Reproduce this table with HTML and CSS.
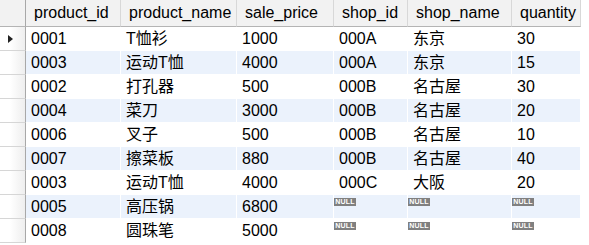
FILE: index.html
```html
<!DOCTYPE html>
<html>

<head>
    <meta charset="utf-8">
    <title>Query result</title>
    <link rel="stylesheet" href="styles.css">
</head>

<body>
    <table class="grid">
        <colgroup>
            <col class="w-ind">
            <col class="w-id">
            <col class="w-name">
            <col class="w-price">
            <col class="w-shop">
            <col class="w-shopname">
            <col class="w-qty">
        </colgroup>
        <thead>
            <tr>
                <th class="ind"></th>
                <th>product_id</th>
                <th>product_name</th>
                <th>sale_price</th>
                <th>shop_id</th>
                <th>shop_name</th>
                <th>quantity</th>
            </tr>
        </thead>
        <tbody>
            <tr class="current">
                <td class="ind"><span class="arrow"></span></td>
                <td>0001</td><td>T恤衫</td><td>1000</td><td>000A</td><td>东京</td><td>30</td>
            </tr>
            <tr>
                <td class="ind"></td>
                <td>0003</td><td>运动T恤</td><td>4000</td><td>000A</td><td>东京</td><td>15</td>
            </tr>
            <tr>
                <td class="ind"></td>
                <td>0002</td><td>打孔器</td><td>500</td><td>000B</td><td>名古屋</td><td>30</td>
            </tr>
            <tr>
                <td class="ind"></td>
                <td>0004</td><td>菜刀</td><td>3000</td><td>000B</td><td>名古屋</td><td>20</td>
            </tr>
            <tr>
                <td class="ind"></td>
                <td>0006</td><td>叉子</td><td>500</td><td>000B</td><td>名古屋</td><td>10</td>
            </tr>
            <tr>
                <td class="ind"></td>
                <td>0007</td><td>擦菜板</td><td>880</td><td>000B</td><td>名古屋</td><td>40</td>
            </tr>
            <tr>
                <td class="ind"></td>
                <td>0003</td><td>运动T恤</td><td>4000</td><td>000C</td><td>大阪</td><td>20</td>
            </tr>
            <tr>
                <td class="ind"></td>
                <td>0005</td><td>高压锅</td><td>6800</td>
                <td class="null"><span class="badge">NULL</span></td>
                <td class="null"><span class="badge">NULL</span></td>
                <td class="null"><span class="badge">NULL</span></td>
            </tr>
            <tr>
                <td class="ind"></td>
                <td>0008</td><td>圆珠笔</td><td>5000</td>
                <td class="null"><span class="badge">NULL</span></td>
                <td class="null"><span class="badge">NULL</span></td>
                <td class="null"><span class="badge">NULL</span></td>
            </tr>
        </tbody>
    </table>
</body>

</html>
```

FILE: styles.css
```css
body {
    margin: 0;
    background-color: #FFFFFF;
    font-family: 'Liberation Sans', 'Noto Sans CJK SC', sans-serif;
    font-size: 16px;
    color: #000000;
}

table.grid {
    border-collapse: separate;
    border-spacing: 0;
    table-layout: fixed;
    width: 581px;
}

col.w-ind { width: 26px; }
col.w-id { width: 95px; }
col.w-name { width: 116px; }
col.w-price { width: 97px; }
col.w-shop { width: 74px; }
col.w-shopname { width: 104px; }
col.w-qty { width: 69px; }

th {
    height: 26px;
    padding: 0 0 0 8px;
    line-height: 26px;
    text-align: left;
    font-weight: normal;
    background-color: #F2F2F2;
    border-right: 1px solid #D8D8D8;
    border-bottom: 1px solid #B4B4B4;
    white-space: nowrap;
    overflow: hidden;
}

td {
    height: 23px;
    padding: 0 0 0 5px;
    line-height: 23px;
    border-right: 1px solid #FFFFFF;
    border-bottom: 1px solid #FFFFFF;
    white-space: nowrap;
    overflow: hidden;
}

tbody tr:nth-child(even) td {
    background-color: #EBF2FC;
}

th.ind {
    padding: 0;
    border-right: 1px solid #A8A8A8;
}

td.ind,
tbody tr:nth-child(even) td.ind {
    padding: 0;
    background: linear-gradient(to right, #FFFFFF 40%, #EEEEEE);
    border-right: 1px solid #A8A8A8;
    border-bottom: 1px solid #D6D6D6;
}

.arrow {
    display: block;
    width: 0;
    height: 0;
    margin-left: 8px;
    border-top: 4px solid transparent;
    border-bottom: 4px solid transparent;
    border-left: 5px solid #222222;
}

td.null {
    padding: 0;
    vertical-align: top;
    line-height: 8px;
}

.badge {
    display: inline-block;
    margin-top: 1px;
    width: 22px;
    height: 8px;
    background-color: #808080;
    color: #FFFFFF;
    font-size: 7px;
    font-weight: bold;
    line-height: 8px;
    text-align: center;
    letter-spacing: 0.2px;
}
```
